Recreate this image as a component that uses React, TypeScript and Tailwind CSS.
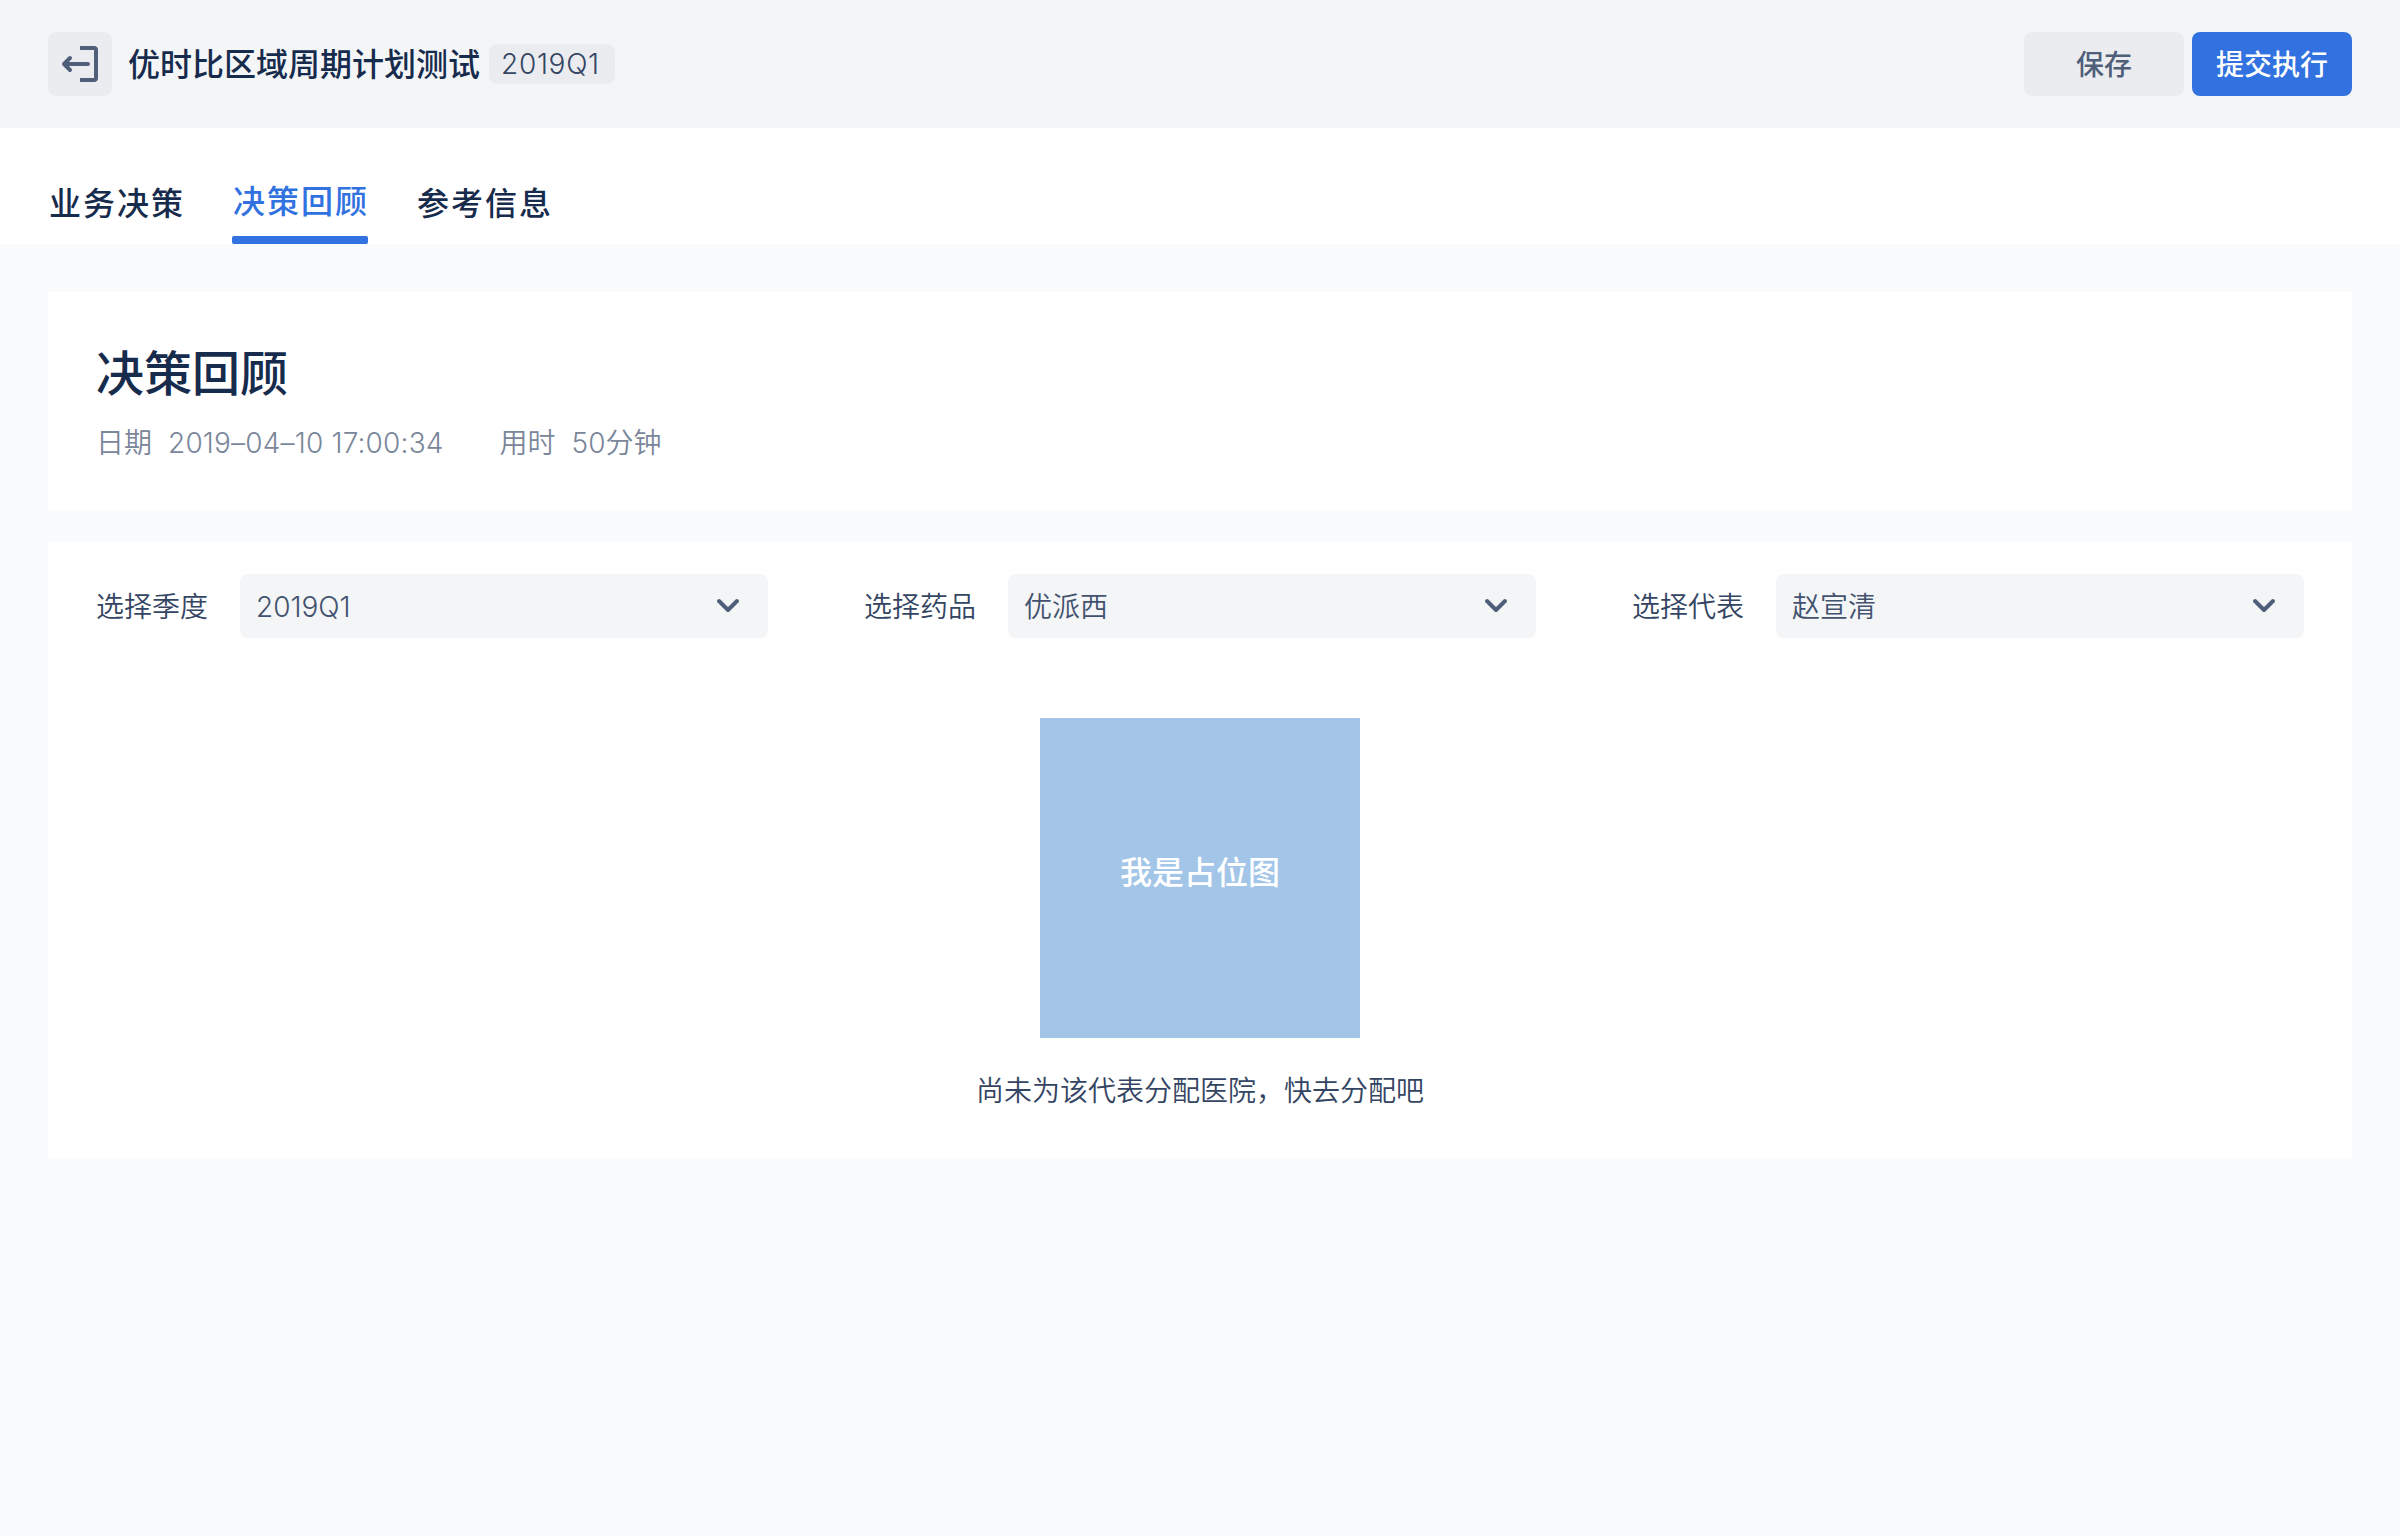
import React from "react";

const tabs = [
  { label: "业务决策", active: false },
  { label: "决策回顾", active: true },
  { label: "参考信息", active: false },
];

const selects = [
  { label: "选择季度", value: "2019Q1" },
  { label: "选择药品", value: "优派西" },
  { label: "选择代表", value: "赵宣清" },
];

function ExitIcon() {
  return (
    <svg width="64" height="64" viewBox="0 0 64 64" fill="none" stroke="#505F79" strokeWidth="4">
      <path d="M32 16H46a2 2 0 0 1 2 2V46a2 2 0 0 1-2 2H32" />
      <path d="M40 32H17M22 26L16 32L22 38" strokeLinecap="round" strokeLinejoin="round" />
    </svg>
  );
}

function Chevron() {
  return (
    <svg width="48" height="48" viewBox="0 0 48 48" fill="none" stroke="#505F79" strokeWidth="4" strokeLinecap="round" strokeLinejoin="round">
      <path d="M15 19L24 28L33 19" />
    </svg>
  );
}

export default function App() {
  return (
    <div className="min-h-[1536px] w-full bg-[#FAFBFD] font-['Inter','Noto_Sans_CJK_SC',sans-serif] text-[28px] leading-10 font-[350] text-[#344563]">
      <header className="flex h-32 items-center justify-between bg-[#F4F5F7] px-12">
        <div className="flex items-center">
          <button className="h-16 w-16 rounded-lg bg-[#EBECF0]">
            <ExitIcon />
          </button>
          <h1 className="ml-4 pt-0.5 text-[32px] font-medium text-[#172B4D]">优时比区域周期计划测试</h1>
          <span className="ml-[9px] flex h-10 w-[126px] items-center rounded-lg bg-[#EBECF0] pl-3 tracking-[0.7px]">2019Q1</span>
        </div>
        <div className="flex gap-2">
          <button className="h-16 w-40 rounded-lg bg-[#EBECF0] pt-0.5 font-medium text-[#505F79]">保存</button>
          <button className="h-16 w-40 rounded-lg bg-[#3172E0] pt-0.5 font-medium text-white">提交执行</button>
        </div>
      </header>
      <nav className="flex h-[116px] gap-12 bg-white px-12 text-[32px] font-medium tracking-[2px] text-[#172B4D]">
        {tabs.map((t) =>
          t.active ? (
            <div key={t.label} className="flex w-[136px] flex-col justify-between pt-[54px] indent-px whitespace-nowrap text-[#3172E0]">
              {t.label}
              <span className="h-2 rounded-[2px] bg-[#3172E0]" />
            </div>
          ) : (
            <div key={t.label} className="w-[136px] pt-14 indent-px whitespace-nowrap">{t.label}</div>
          ),
        )}
      </nav>
      <main className="flex flex-col gap-8 px-12 pt-12">
        <section className="h-[218px] bg-white px-12 pt-[50px]">
          <h2 className="text-[48px] leading-[64px] font-medium text-[#172B4D]">决策回顾</h2>
          <div className="mt-[17px] flex text-[#7A869A]">
            <span>日期</span>
            <span className="ml-4 tracking-[0.18px]">2019–04–10 17:00:34</span>
            <span className="ml-14">用时</span>
            <span className="ml-4">50分钟</span>
          </div>
        </section>
        <section className="h-[616px] bg-white px-12 pt-8">
          <div className="grid grid-cols-3 gap-24">
            {selects.map((s) => (
              <label key={s.label} className="flex items-center justify-between">
                <span className="pt-0.5">{s.label}</span>
                <div className="flex h-16 w-[528px] items-center justify-between rounded-lg bg-[#F4F5F7] px-4 text-[#42526E]">
                  <span className="pt-0.5">{s.value}</span>
                  <Chevron />
                </div>
              </label>
            ))}
          </div>
          <div className="mt-20 flex flex-col items-center">
            <div className="flex h-80 w-80 items-center justify-center bg-[#A2C5E8] pb-2.5 text-[32px] font-medium text-white">我是占位图</div>
            <p className="mt-[33px]">尚未为该代表分配医院，快去分配吧</p>
          </div>
        </section>
      </main>
    </div>
  );
}
